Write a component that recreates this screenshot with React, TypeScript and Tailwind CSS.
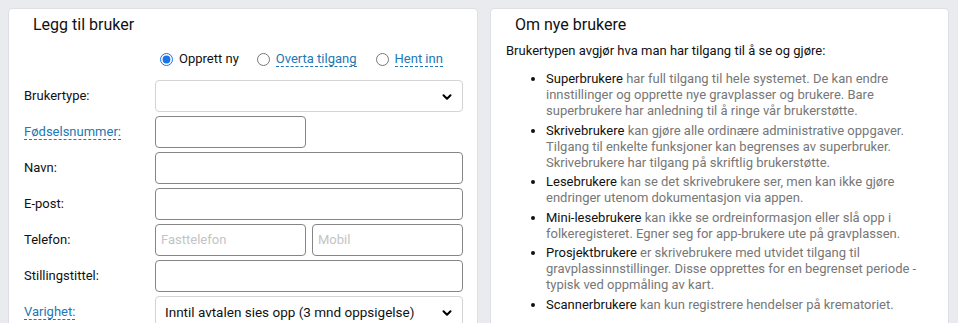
import { ChevronDown } from 'lucide-react'

const font = { fontFamily: 'Roboto, "Liberation Sans", sans-serif' }

function Dashed({ children }: { children: React.ReactNode }) {
    return (
        <span className="text-[#2178b5] border-b border-dashed border-[#2178b5] leading-[15px] inline-block">
            {children}
        </span>
    )
}

function Select({ value }: { value?: string }) {
    return (
        <div className="relative h-8 w-full rounded-[4px] border border-[#d4d4d4] bg-white flex items-center pl-[9px]">
            <span className="text-[13.5px] text-[#111]">{value}</span>
            <ChevronDown size={14} strokeWidth={3.5} className="absolute right-[8px] top-[9px] text-black" />
        </div>
    )
}

function Input({ placeholder, className = '' }: { placeholder?: string; className?: string }) {
    return (
        <div className={`h-8 rounded-[4px] border border-[#858585] bg-white flex items-center pl-[5px] ${className}`}>
            {placeholder && <span className="text-[13px] text-[#c4c4c4]">{placeholder}</span>}
        </div>
    )
}

function Row({ label, children }: { label: React.ReactNode; children: React.ReactNode }) {
    return (
        <>
            <div className="flex items-center text-[13px] text-[#111]">{label}</div>
            <div className="flex items-center">{children}</div>
        </>
    )
}

const types = [
    ['Superbrukere', 'har full tilgang til hele systemet. De kan endre innstillinger og opprette nye gravplasser og brukere. Bare superbrukere har anledning til å ringe vår brukerstøtte.'],
    ['Skrivebrukere', 'kan gjøre alle ordinære administrative oppgaver. Tilgang til enkelte funksjoner kan begrenses av superbruker. Skrivebrukere har tilgang på skriftlig brukerstøtte.'],
    ['Lesebrukere', 'kan se det skrivebrukere ser, men kan ikke gjøre endringer utenom dokumentasjon via appen.'],
    ['Mini-lesebrukere', 'kan ikke se ordreinformasjon eller slå opp i folkeregisteret. Egner seg for app-brukere ute på gravplassen.'],
    ['Prosjektbrukere', 'er skrivebrukere med utvidet tilgang til gravplassinnstillinger. Disse opprettes for en begrenset periode - typisk ved oppmåling av kart.'],
    ['Scannerbrukere', 'kan kun registrere hendelser på krematoriet.'],
]

export default function App() {
    return (
        <div className="min-h-[323px] bg-[#e9ebee] pt-2 pl-2 pr-[9px] flex gap-[12px]" style={font}>
            {/* Legg til bruker */}
            <div className="w-[470px] shrink-0 h-[340px] bg-white border border-[#dcdfe3] rounded-[4px] pl-[15px] pr-[14px] pt-[4px]">
                <h2 className="text-[16px] leading-6 text-[#111] pl-[9px]">Legg til bruker</h2>
                <div className="mt-[12px] h-5 flex items-center pl-[136px] text-[13px] text-[#111]">
                    <label className="flex items-center">
                        <input type="radio" defaultChecked name="mode" className="m-0 w-[13px] h-[13px] accent-[#1a73e8]" />
                        <span className="ml-[6px]">Opprett ny</span>
                    </label>
                    <label className="flex items-center ml-[18px]">
                        <input type="radio" name="mode" className="m-0 w-[13px] h-[13px]" />
                        <span className="ml-[6px]"><Dashed>Overta tilgang</Dashed></span>
                    </label>
                    <label className="flex items-center ml-[19px]">
                        <input type="radio" name="mode" className="m-0 w-[13px] h-[13px]" />
                        <span className="ml-[6px]"><Dashed>Hent inn</Dashed></span>
                    </label>
                </div>
                <div className="mt-[11px] grid grid-cols-[131px_1fr] auto-rows-[32px] gap-y-[4px]">
                    <Row label="Brukertype:"><Select /></Row>
                    <Row label={<Dashed>Fødselsnummer:</Dashed>}><Input className="w-[151px]" /></Row>
                    <Row label="Navn:"><Input className="w-full" /></Row>
                    <Row label="E-post:"><Input className="w-full" /></Row>
                    <Row label="Telefon:">
                        <div className="w-full grid grid-cols-2 gap-[6px]">
                            <Input placeholder="Fasttelefon" />
                            <Input placeholder="Mobil" />
                        </div>
                    </Row>
                    <Row label="Stillingstittel:"><Input className="w-full" /></Row>
                    <Row label={<Dashed>Varighet:</Dashed>}><Select value="Inntil avtalen sies opp (3 mnd oppsigelse)" /></Row>
                </div>
            </div>

            {/* Om nye brukere */}
            <div className="flex-1 h-[340px] bg-white border border-[#dcdfe3] rounded-[4px] px-[15px] pt-[4px]">
                <h2 className="text-[16px] leading-6 text-[#111] pl-[9px]">Om nye brukere</h2>
                <p className="mt-[6px] text-[13px] leading-4 text-[#111]">Brukertypen avgjør hva man har tilgang til å se og gjøre:</p>
                <ul className="mt-[12px] list-disc pl-10 pr-[4px] flex flex-col gap-[3.5px] text-[13px] leading-4 text-[#777]">
                    {types.map(([name, text]) => (
                        <li key={name} className="marker:text-[#111]">
                            <span className="text-[#111]">{name}</span> {text}
                        </li>
                    ))}
                </ul>
            </div>
        </div>
    )
}
